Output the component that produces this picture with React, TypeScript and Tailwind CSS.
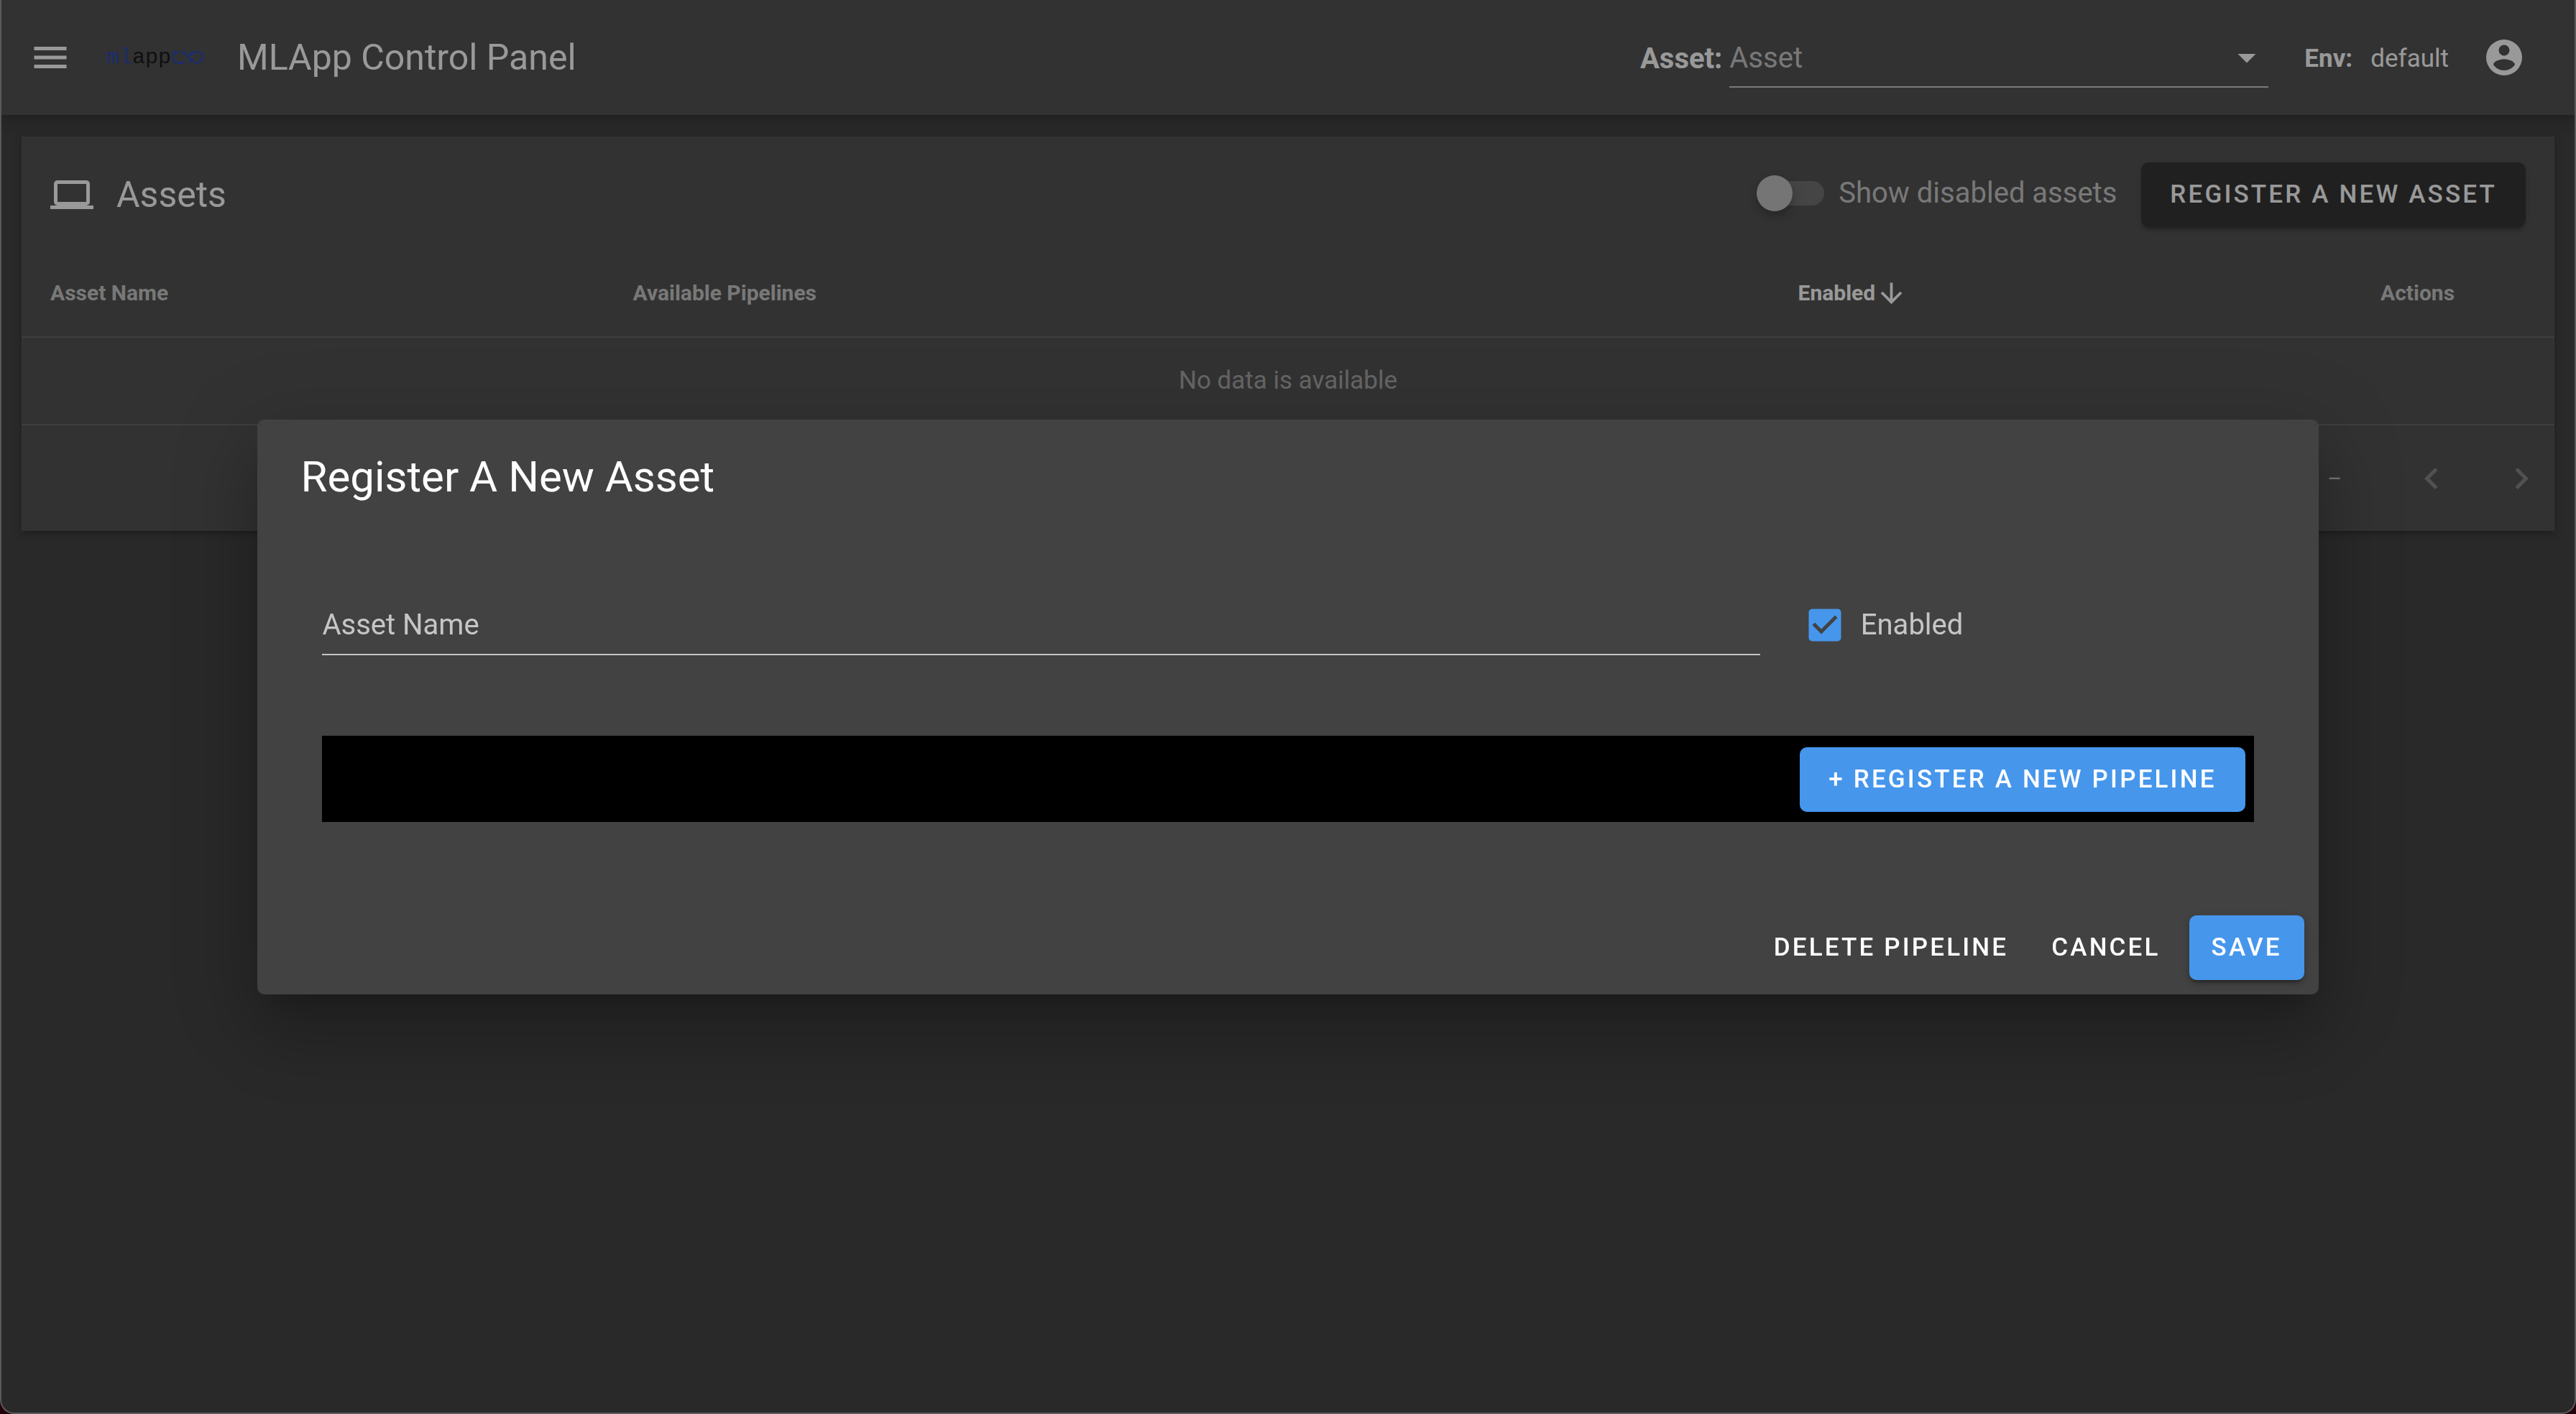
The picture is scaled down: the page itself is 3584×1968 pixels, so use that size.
import React from "react";

type IconProps = { d: string; className?: string };

function Icon({ d, className = "size-[60px]" }: IconProps) {
  return (
    <svg viewBox="0 0 24 24" fill="currentColor" aria-hidden="true" className={`shrink-0 ${className}`}>
      <path d={d} />
    </svg>
  );
}

const paths = {
  menu: "M3,6H21V8H3V6M3,11H21V13H3V11M3,16H21V18H3V16Z",
  caret: "M7,10L12,15L17,10H7Z",
  account:
    "M12,2A10,10 0 0,0 2,12A10,10 0 0,0 12,22A10,10 0 0,0 22,12A10,10 0 0,0 12,2M12,5A3,3 0 0,1 15,8A3,3 0 0,1 12,11A3,3 0 0,1 9,8A3,3 0 0,1 12,5M12,19.2C9.5,19.2 7.29,17.92 6,16C6.03,14 10,12.9 12,12.9C14,12.9 17.97,14 18,16C16.71,17.92 14.5,19.2 12,19.2Z",
  laptop:
    "M4,6H20V16H4M20,18A2,2 0 0,0 22,16V6C22,4.89 21.1,4 20,4H4C2.89,4 2,4.89 2,6V16A2,2 0 0,0 4,18H0V20H24V18H20Z",
  arrowDown:
    "M11,4H13V16L18.5,10.5L19.92,11.92L12,19.84L4.08,11.92L5.5,10.5L11,16V4Z",
  chevronLeft: "M15.41,16.58L10.83,12L15.41,7.41L14,6L8,12L14,18L15.41,16.58Z",
  chevronRight: "M8.59,16.58L13.17,12L8.59,7.41L10,6L16,12L10,18L8.59,16.58Z",
  checked:
    "M10,17L5,12L6.41,10.58L10,14.17L17.59,6.58L19,8M19,3H5C3.89,3 3,3.89 3,5V19A2,2 0 0,0 5,21H19A2,2 0 0,0 21,19V5C21,3.89 20.1,3 19,3Z",
};

function Logo() {
  return (
    <span className="flex items-center font-['Liberation_Mono',monospace] text-[30px] leading-[40px]">
      <span className="text-[#1637b4]">ml</span>
      <span className="text-black">app</span>
      <svg viewBox="0 0 46 22" fill="none" stroke="#1637b4" strokeWidth="2.4" aria-hidden="true" className="ml-px h-[22px] w-[46px]">
        <path d="M4 5C0 8 0 14 4 17C8 19.5 15 19.5 19 16" />
        <path d="M11 3C16 3 19 5 22 9C24 12 26 14 28 16" />
        <path d="M27 6C31 2 39 2 42 7C45 12 41 19 32 18.5" />
        <path d="M1 2L8 2L7 8Z M31 18.5L23.5 17L29 11Z M24.5 9.5L25 2.500L31 8Z" fill="#1637b4" stroke="none" />
      </svg>
    </span>
  );
}

const raised = "shadow-[0_8px_3px_-5px_rgba(0,0,0,0.2),0_5px_5px_0_rgba(0,0,0,0.14),0_3px_13px_0_rgba(0,0,0,0.12)]";
const buttonText = "text-[35px] leading-[40px] font-medium uppercase tracking-[0.09em] whitespace-nowrap";

function TopBar() {
  return (
    <header className="relative flex h-[160px] items-center justify-between bg-[#424242] pr-[68px] pl-[38px] shadow-[0_5px_10px_-3px_rgba(0,0,0,0.2),0_10px_13px_0_rgba(0,0,0,0.14),0_3px_25px_0_rgba(0,0,0,0.12)]">
      <div className="flex items-center">
        <button type="button" aria-label="Menu">
          <Icon d={paths.menu} />
        </button>
        <a href="#home" aria-label="Home" className="ml-[48px]">
          <Logo />
        </a>
        <h1 className="ml-[45px] text-[50px] leading-[60px]">MLApp Control Panel</h1>
      </div>
      <div className="flex items-center">
        <label htmlFor="asset-select" className="pt-1 text-[40px] leading-[48px] font-bold">
          Asset:
        </label>
        <div className="relative ml-[10px] text-white">
          <select
            id="asset-select"
            defaultValue=""
            className="h-[84px] w-[750px] appearance-none border-b-2 border-white/70 bg-transparent pt-1 text-[40px] text-white/70 outline-none"
          >
            <option value="">Asset</option>
          </select>
          <span className="pointer-events-none absolute inset-y-0 right-0 flex items-center">
            <Icon d={paths.caret} />
          </span>
        </div>
        <p className="ml-[50px] flex gap-[25px] pt-1 text-[35px] leading-[40px]">
          <strong className="font-bold">Env:</strong>
          <span>default</span>
        </p>
        <button type="button" aria-label="Account" className="ml-[47px]">
          <Icon d={paths.account} />
        </button>
      </div>
    </header>
  );
}

function AssetsCard() {
  return (
    <section className={`mx-[28px] mt-[30px] bg-[#424242] ${raised}`}>
      <div className="flex items-center justify-between px-10 pt-9 pb-8">
        <div className="flex items-center gap-8">
          <Icon d={paths.laptop} />
          <h2 className="text-[50px] leading-[60px]">Assets</h2>
        </div>
        <div className="flex items-center gap-[34px]">
          <label className="flex items-center gap-5 pb-1 text-[40px] leading-[48px] text-white/70">
            <span className="relative flex h-[50px] w-[94px] items-center">
              <input type="checkbox" role="switch" className="peer absolute inset-0 opacity-0" />
              <span className="ml-1 h-[34px] w-[90px] rounded-full bg-[#646464]" />
              <span className="absolute left-0 size-[50px] rounded-full bg-[#bdbdbd] shadow-[0_5px_10px_-3px_rgba(0,0,0,0.2),0_10px_13px_0_rgba(0,0,0,0.14),0_3px_25px_0_rgba(0,0,0,0.12)]" />
            </span>
            Show disabled assets
          </label>
          <button type="button" className={`h-[90px] rounded-[10px] bg-[#212121] px-10 ${buttonText} ${raised}`}>
            Register a new asset
          </button>
        </div>
      </div>
      <table className="w-full table-fixed text-left">
        <thead>
          <tr className="h-[121px] border-b-2 border-white/12 text-[30px] leading-[40px] text-white/70">
            <th className="w-[23%] px-10 font-bold">Asset Name</th>
            <th className="w-[46%] px-10 font-bold">Available Pipelines</th>
            <th className="w-[23%] px-10 font-bold text-white" aria-sort="descending">
              <button type="button" className="flex items-center">
                Enabled
                <Icon d={paths.arrowDown} className="size-[45px]" />
              </button>
            </th>
            <th className="w-[8%] px-10 font-bold">Actions</th>
          </tr>
        </thead>
        <tbody>
          <tr className="h-[122px] border-b-2 border-white/12">
            <td colSpan={4} className="text-center text-[35px] leading-[40px] text-white/50">
              No data is available
            </td>
          </tr>
        </tbody>
      </table>
      <div className="flex h-[147px] items-center justify-end pr-[16px] text-[30px] leading-[40px] text-white/70">
        <span>–</span>
        <button type="button" aria-label="Previous page" disabled className="ml-[95px] text-white/30">
          <Icon d={paths.chevronLeft} />
        </button>
        <button type="button" aria-label="Next page" disabled className="ml-[65px] text-white/30">
          <Icon d={paths.chevronRight} />
        </button>
      </div>
    </section>
  );
}

function RegisterDialog() {
  return (
    <div className="fixed inset-0 flex items-center justify-center">
      <form
        role="dialog"
        aria-labelledby="dialog-title"
        onSubmit={(event) => event.preventDefault()}
        className="w-4/5 rounded-[10px] bg-[#424242] shadow-[0_28px_38px_-18px_rgba(0,0,0,0.2),0_60px_95px_8px_rgba(0,0,0,0.14),0_23px_115px_20px_rgba(0,0,0,0.12)]"
      >
        <h2 id="dialog-title" className="px-[60px] pt-[40px] pb-[25px] text-[60px] leading-[80px]">
          Register A New Asset
        </h2>
        <div className="px-[90px] pt-[99px]">
          <div className="grid grid-cols-12 gap-[60px]">
            <input
              type="text"
              aria-label="Asset Name"
              placeholder="Asset Name"
              className="col-span-9 h-[84px] border-b-2 border-white/70 bg-transparent text-[40px] outline-none placeholder:text-white/70"
            />
            <label className="col-span-3 flex items-center gap-5 text-[40px] leading-[48px] text-white/70">
              <span className="relative">
                <input type="checkbox" defaultChecked className="absolute inset-0 opacity-0" />
                <Icon d={paths.checked} className="size-[60px] text-[#4696ec]" />
              </span>
              Enabled
            </label>
          </div>
          <div className="mt-[112px] flex h-[120px] items-center justify-end bg-black px-3 pt-[2px]">
            <button type="button" className={`h-[90px] rounded-[10px] bg-[#4696ec] px-10 ${buttonText}`}>
              + Register a new pipeline
            </button>
          </div>
        </div>
        <div className="flex justify-end gap-5 px-5 pt-[130px] pb-5">
          <button type="button" className={`h-[90px] px-5 ${buttonText}`}>
            Delete pipeline
          </button>
          <button type="button" className={`h-[90px] px-5 ${buttonText}`}>
            Cancel
          </button>
          <button type="submit" className={`h-[90px] min-w-[160px] rounded-[10px] bg-[#4696ec] px-5 ${buttonText} ${raised}`}>
            Save
          </button>
        </div>
      </form>
    </div>
  );
}

export default function App() {
  return (
    <div className="flex min-h-screen flex-col bg-[#24000a] font-[Roboto,sans-serif] text-white">
      <div className="relative grow overflow-hidden rounded-b-[20px] border-x-2 border-b-2 border-[#5a5a5a] bg-[#303030]">
        <TopBar />
        <AssetsCard />
        <div className="absolute inset-0 bg-[#212121]/46" />
      </div>
      <RegisterDialog />
    </div>
  );
}
